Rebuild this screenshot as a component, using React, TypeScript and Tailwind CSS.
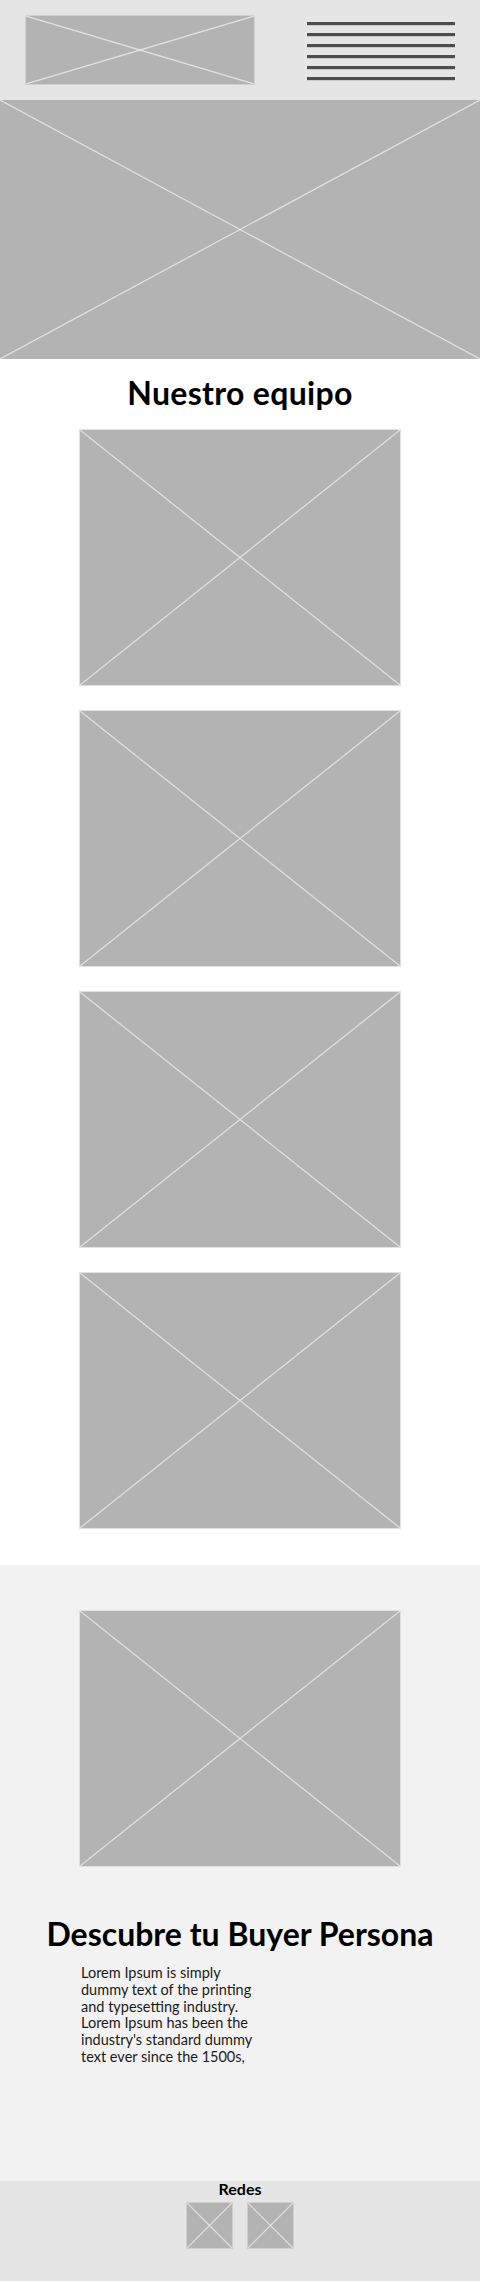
function Placeholder({ className = '' }: { className?: string }) {
  return (
    <div className={`relative bg-[#b3b3b3] ${className}`}>
      <svg className="absolute inset-0 h-full w-full" viewBox="0 0 100 100" preserveAspectRatio="none">
        <line x1="0" y1="0" x2="100" y2="100" stroke="#e3e3e3" strokeWidth="1.2" vectorEffect="non-scaling-stroke" />
        <line x1="100" y1="0" x2="0" y2="100" stroke="#e3e3e3" strokeWidth="1.2" vectorEffect="non-scaling-stroke" />
      </svg>
    </div>
  );
}

const team = [1, 2, 3, 4];

const lorem = [
  'Lorem Ipsum is simply',
  'dummy text of the printing',
  'and typesetting industry.',
  'Lorem Ipsum has been the',
  "industry's standard dummy",
  'text ever since the 1500s,',
];

export default function App() {
  return (
    <div className="w-[480px] font-['Lato',_'Liberation_Sans',_sans-serif] text-black">
      <header className="flex h-[100px] items-start bg-[#e5e5e5]">
        <Placeholder className="ml-[25px] mt-[15px] h-[70px] w-[230px] border border-[#cfcfcf]" />
        <div className="ml-auto mr-[25px] mt-[22px] flex w-[148px] flex-col gap-[8px]">
          {[0, 1, 2, 3, 4, 5].map((i) => (
            <span key={i} className="block h-[3px] bg-[#4d4d4d] shadow-[0_1px_0_#c8c8c8]" />
          ))}
        </div>
      </header>

      <Placeholder className="h-[259px] w-full" />

      <section className="flex flex-col items-center bg-white pb-[36px] pt-[15px]">
        <h2 className="text-[32px] font-bold leading-[38px] tracking-[0.3px]">Nuestro equipo</h2>
        <div className="mt-[17px] flex flex-col gap-[24px]">
          {team.map((n) => (
            <Placeholder key={n} className="h-[257px] w-[322px] border border-[#e0e0e0]" />
          ))}
        </div>
      </section>

      <section className="flex h-[616px] flex-col items-center bg-[#f2f2f2] pt-[45px]">
        <Placeholder className="h-[257px] w-[322px] border border-[#e0e0e0]" />
        <h2 className="mt-[47px] text-[32px] font-bold leading-[40px]">Descubre tu Buyer Persona</h2>
        <p className="mt-[11px] w-[318px] text-[14.5px] leading-[16.8px] text-[#1a1a1a]">
          {lorem.map((line) => (
            <span key={line} className="block whitespace-nowrap">
              {line}
            </span>
          ))}
        </p>
      </section>

      <footer className="flex h-[100px] flex-col items-center bg-[#e5e5e5]">
        <h3 className="text-[16px] font-bold leading-4">Redes</h3>
        <div className="mt-[5px] flex gap-[14px]">
          <Placeholder className="h-[47px] w-[47px] border border-[#cfcfcf]" />
          <Placeholder className="h-[47px] w-[47px] border border-[#cfcfcf]" />
        </div>
      </footer>
    </div>
  );
}
